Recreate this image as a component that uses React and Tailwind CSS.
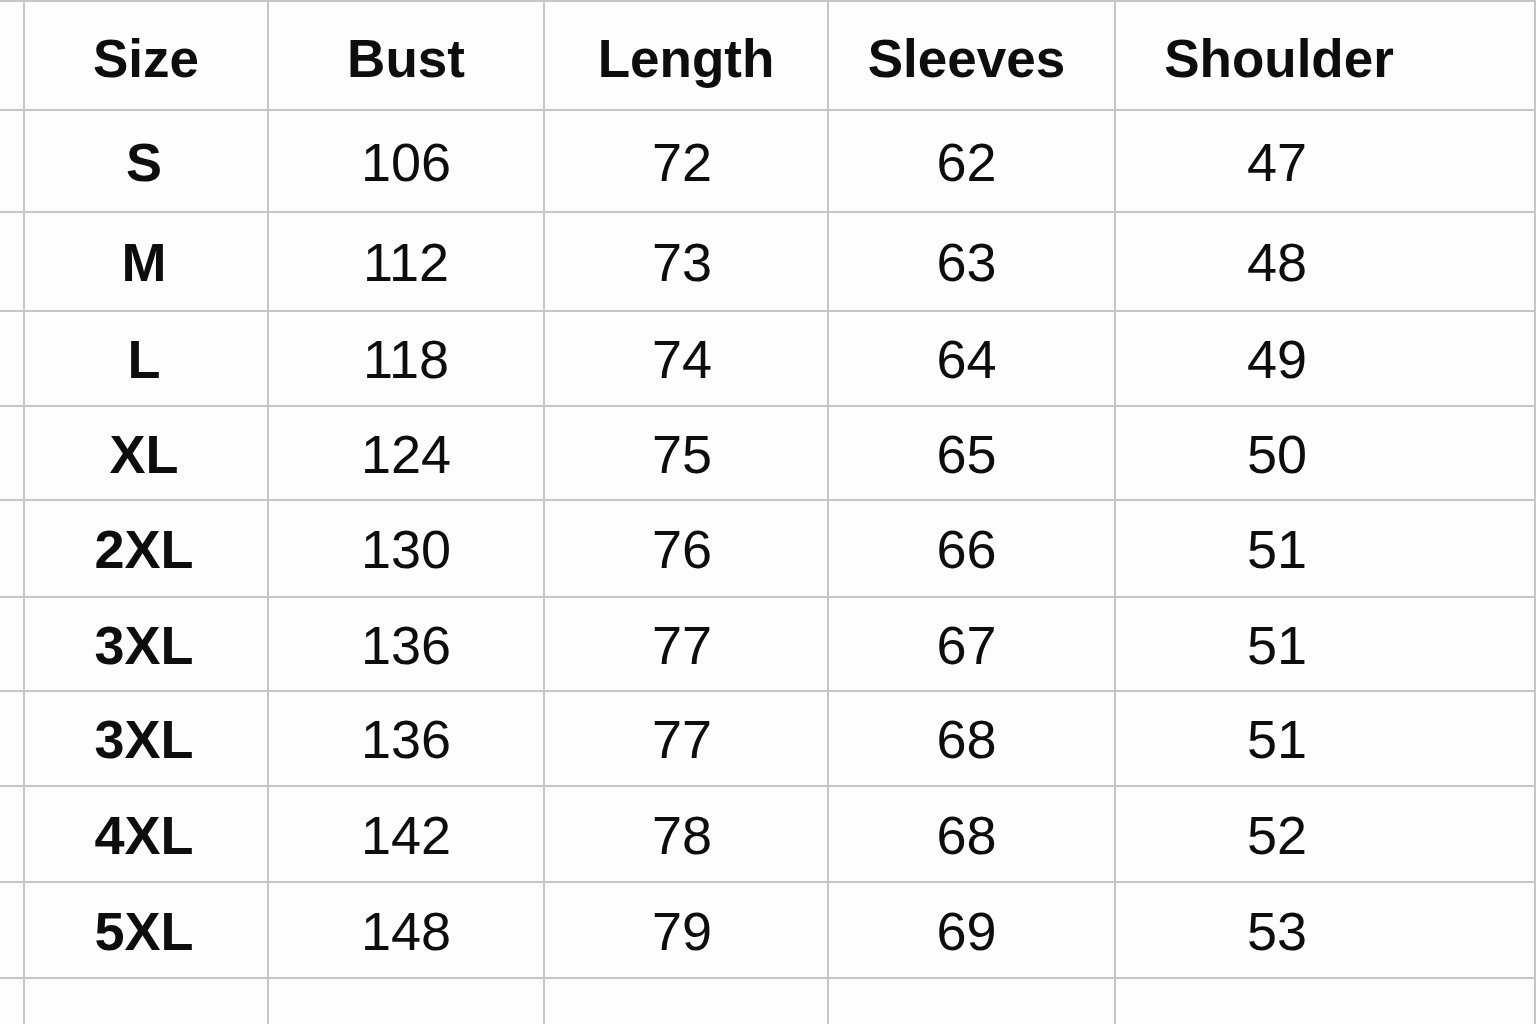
import React from "react";

const header = ["Size", "Bust", "Length", "Sleeves", "Shoulder"];
const rows = [
  ["S", "106", "72", "62", "47"],
  ["M", "112", "73", "63", "48"],
  ["L", "118", "74", "64", "49"],
  ["XL", "124", "75", "65", "50"],
  ["2XL", "130", "76", "66", "51"],
  ["3XL", "136", "77", "67", "51"],
  ["3XL", "136", "77", "68", "51"],
  ["4XL", "142", "78", "68", "52"],
  ["5XL", "148", "79", "69", "53"],
];
const heights = ["h-[100px]", "h-[97px]", "h-[93px]", "h-[92px]", "h-[95px]", "h-[92px]", "h-[93px]", "h-[94px]", "h-[94px]"];
const colPad = ["pr-[4px]", "", "pr-[8px]", "pr-[10px]", "pr-[96px]"];

function Cell({ children, className = "" }) {
  return (
    <div className={"bg-[#fdfdfd] flex items-center justify-center " + className}>
      {children}
    </div>
  );
}

export default function App() {
  return (
    <div
      className="w-[1536px] h-[1024px] overflow-hidden bg-[#c6c6c6] pt-[2px] pr-[2px] text-[#0d0d0d]"
      style={{ fontFamily: '"Liberation Sans", Arial, sans-serif' }}
    >
      <div className="grid grid-cols-[23px_242px_274px_282px_285px_418px] gap-[2px]">
        {/* header */}
        <Cell className="h-[107px]" />
        {header.map((h, i) => (
          <Cell
            key={h}
            className={
              "h-[107px] pt-[7px] text-[53px] font-bold " +
              (i === 4 ? "pr-[92px]" : i === 3 ? "pr-[10px]" : "")
            }
          >
            {h}
          </Cell>
        ))}
        {rows.map((r, ri) => (
          <React.Fragment key={ri}>
            <Cell className={heights[ri]} />
            {r.map((v, ci) => (
              <Cell
                key={ci}
                className={
                  heights[ri] +
                  " pt-[2px] text-[54px] " +
                  (ci === 0 ? "font-bold " : "font-normal ") +
                  colPad[ci]
                }
              >
                {v}
              </Cell>
            ))}
          </React.Fragment>
        ))}
        <Cell className="h-[60px]" />
        <Cell className="h-[60px]" />
        <Cell className="h-[60px]" />
        <Cell className="h-[60px]" />
        <Cell className="h-[60px]" />
        <Cell className="h-[60px]" />
      </div>
    </div>
  );
}
